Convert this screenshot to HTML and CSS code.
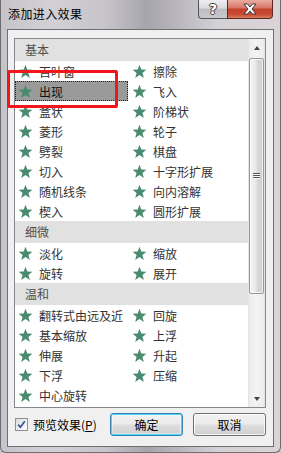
FILE: index.html
```html
<!DOCTYPE html>
<html lang="zh-CN">
<head>
<meta charset="utf-8">
<title>添加进入效果</title>
<link rel="stylesheet" href="styles.css">
</head>
<body>
<svg class="defs" width="0" height="0" aria-hidden="true">
  <symbol id="star" viewBox="0 0 24 24">
    <polygon points="12,1.2 14.9,8.8 23,9.1 16.7,14.2 18.9,22.4 12,17.7 5.1,22.4 7.3,14.2 1,9.1 9.1,8.8"/>
  </symbol>
</svg>
<div class="window">
  <div class="titlebar">
    <span class="title">添加进入效果</span>
    <div class="caption">
      <div class="cbtn help"><span>?</span></div>
      <div class="cbtn close">
        <svg width="16" height="12" viewBox="0 0 16 12"><path d="M2 1 H5.5 L8 4 L10.5 1 H14 L10 6 L14 11 H10.5 L8 8 L5.5 11 H2 L6 6 Z" fill="#fff" stroke="#3a3a3a" stroke-width="1" stroke-linejoin="round"/></svg>
      </div>
    </div>
  </div>
  <div class="client">
    <div class="listbox">
      <div class="list">
        <div class="group">基本</div>
        <div class="grid">
          <div class="item"><svg class="star"><use href="#star"/></svg>百叶窗</div>
          <div class="item"><svg class="star"><use href="#star"/></svg>擦除</div>
          <div class="item selected"><svg class="star"><use href="#star"/></svg>出现</div>
          <div class="item"><svg class="star"><use href="#star"/></svg>飞入</div>
          <div class="item"><svg class="star"><use href="#star"/></svg>盒状</div>
          <div class="item"><svg class="star"><use href="#star"/></svg>阶梯状</div>
          <div class="item"><svg class="star"><use href="#star"/></svg>菱形</div>
          <div class="item"><svg class="star"><use href="#star"/></svg>轮子</div>
          <div class="item"><svg class="star"><use href="#star"/></svg>劈裂</div>
          <div class="item"><svg class="star"><use href="#star"/></svg>棋盘</div>
          <div class="item"><svg class="star"><use href="#star"/></svg>切入</div>
          <div class="item"><svg class="star"><use href="#star"/></svg>十字形扩展</div>
          <div class="item"><svg class="star"><use href="#star"/></svg>随机线条</div>
          <div class="item"><svg class="star"><use href="#star"/></svg>向内溶解</div>
          <div class="item"><svg class="star"><use href="#star"/></svg>楔入</div>
          <div class="item"><svg class="star"><use href="#star"/></svg>圆形扩展</div>
        </div>
        <div class="group">细微</div>
        <div class="grid">
          <div class="item"><svg class="star"><use href="#star"/></svg>淡化</div>
          <div class="item"><svg class="star"><use href="#star"/></svg>缩放</div>
          <div class="item"><svg class="star"><use href="#star"/></svg>旋转</div>
          <div class="item"><svg class="star"><use href="#star"/></svg>展开</div>
        </div>
        <div class="group">温和</div>
        <div class="grid">
          <div class="item"><svg class="star"><use href="#star"/></svg>翻转式由远及近</div>
          <div class="item"><svg class="star"><use href="#star"/></svg>回旋</div>
          <div class="item"><svg class="star"><use href="#star"/></svg>基本缩放</div>
          <div class="item"><svg class="star"><use href="#star"/></svg>上浮</div>
          <div class="item"><svg class="star"><use href="#star"/></svg>伸展</div>
          <div class="item"><svg class="star"><use href="#star"/></svg>升起</div>
          <div class="item"><svg class="star"><use href="#star"/></svg>下浮</div>
          <div class="item"><svg class="star"><use href="#star"/></svg>压缩</div>
          <div class="item"><svg class="star"><use href="#star"/></svg>中心旋转</div>
        </div>
      </div>
      <div class="scrollbar">
        <div class="sb-btn"><span class="arrow up"></span></div>
        <div class="track">
          <div class="thumb"><span class="grip"></span></div>
        </div>
        <div class="sb-btn"><span class="arrow down"></span></div>
      </div>
    </div>
    <div class="footer">
      <div class="check">
        <span class="box"><svg width="11" height="11" viewBox="0 0 11 11"><path d="M2.2 5.6 L4.4 8.2 L8.8 2.2" fill="none" stroke="#34519a" stroke-width="1.7"/></svg></span>
        <span class="label">预览效果(<u>P</u>)</span>
      </div>
      <div class="btn default">确定</div>
      <div class="btn">取消</div>
    </div>
  </div>
  <div class="annotation"></div>
</div>
</body>
</html>
```
FILE: styles.css
```css
* { box-sizing: border-box; }
html, body { margin: 0; padding: 0; }
body {
  width: 281px;
  height: 453px;
  overflow: hidden;
  font-family: "Noto Sans CJK SC", "Noto Sans", sans-serif;
  font-size: 12px;
  background: #c9c7cc;
}
.defs { position: absolute; }

.window {
  position: relative;
  width: 281px;
  height: 453px;
  display: flex;
  flex-direction: column;
  border: 1px solid #6c6c70;
  border-top: none;
  border-radius: 0 0 6px 6px;
  background:
    linear-gradient(to right, #c6c4c9 0%, #d3d1d5 18%, #c6c4c9 38%, #a7a5ac 52%, #b6b4ba 62%, #d4d2d6 78%, #dcd3d7 100%);
}

.titlebar {
  height: 29px;
  flex: none;
  display: flex;
  align-items: flex-start;
  padding-left: 7px;
}
.title {
  margin-top: 5px;
  color: #000;
  font-size: 12px;
  letter-spacing: 0.4px;
  line-height: 18px;
}
.caption {
  margin-left: auto;
  margin-right: 7px;
  display: flex;
}
.cbtn {
  height: 19px;
  display: flex;
  align-items: center;
  justify-content: center;
  border: 1px solid #55555c;
  border-top: none;
}
.help {
  width: 29px;
  border-right: none;
  border-radius: 0 0 0 4px;
  background: linear-gradient(#eeeef0 0%, #dadadd 45%, #bdbdc3 52%, #c8c8ce 100%);
}
.help span {
  font-family: "DejaVu Sans", sans-serif;
  font-weight: bold;
  font-size: 14px;
  line-height: 14px;
  color: #fff;
  text-shadow: -1px 0 #3c3c3c, 1px 0 #3c3c3c, 0 -1px #3c3c3c, 0 1px #3c3c3c;
}
.close {
  width: 46px;
  border-radius: 0 0 4px 0;
  border-color: #5a2a22;
  background: linear-gradient(#e9ada0 0%, #d8776a 42%, #c4412c 52%, #c84b33 80%, #dc7d5e 100%);
}

.client {
  flex: 1;
  margin: 0 6px 5px 6px;
  border: 1px solid #6f6f6f;
  background: #f0f0f0;
  padding: 8px 7px 0 6px;
  display: flex;
  flex-direction: column;
}

.listbox {
  width: 252px;
  height: 370px;
  border: 1px solid #828790;
  display: flex;
  background: #fff;
}
.list {
  flex: 1;
  overflow: hidden;
  background: #fff;
}
.group {
  height: 22px;
  line-height: 22px;
  padding-left: 10px;
  background: #e1e1e1;
  color: #4f4f4f;
}
.grid {
  display: grid;
  grid-template-columns: 114px 1fr;
  grid-auto-rows: 20px;
}
.item {
  display: flex;
  align-items: center;
  height: 20px;
  padding-left: 3px;
  color: #333;
  white-space: nowrap;
}
.item.selected {
  margin-right: 1px;
  background: #9a9a9a;
  outline: 1px dotted #222;
  outline-offset: -1px;
  color: #111;
}
.star {
  width: 15px;
  height: 15px;
  fill: #4a8b70;
  margin-right: 6px;
  flex: none;
}

.scrollbar {
  width: 17px;
  display: flex;
  flex-direction: column;
  background: linear-gradient(to right, #e2e2e2 0%, #eeeeee 12%, #f3f3f3 50%, #eeeeee 88%, #e2e2e2 100%);
}
.sb-btn {
  height: 17px;
  flex: none;
  display: flex;
  align-items: center;
  justify-content: center;
}
.arrow {
  width: 0;
  height: 0;
  border-left: 3.5px solid transparent;
  border-right: 3.5px solid transparent;
  margin-left: 1px;
}
.arrow.up { border-bottom: 4px solid #444; }
.arrow.down { border-top: 4px solid #444; }
.track {
  flex: 1;
  padding-top: 2px;
}
.thumb {
  margin-left: 1px;
  width: 15px;
  height: 236px;
  border: 1px solid #979797;
  border-radius: 2px;
  background: linear-gradient(to right, #f4f4f4 0%, #e8e8e8 45%, #d9d9d9 55%, #cfcfcf 100%);
  box-shadow: inset 0 0 0 1px rgba(255,255,255,0.7);
  display: flex;
  align-items: center;
  justify-content: center;
}
.grip {
  width: 7px;
  height: 6px;
  background: repeating-linear-gradient(#555 0 1px, #fafafa 1px 2px);
}

.footer {
  margin-top: 5px;
  height: 23px;
  display: flex;
  align-items: center;
}
.check {
  flex: 1;
  display: flex;
  align-items: center;
  padding-left: 1px;
  color: #000;
}
.box {
  width: 13px;
  height: 13px;
  border: 1px solid #8e8f8f;
  background: linear-gradient(135deg, #dcdcdc, #fdfdfd);
  display: flex;
  align-items: center;
  justify-content: center;
  margin-right: 5px;
}
.label u { text-decoration: underline; text-underline-offset: 1px; }
.btn {
  width: 73px;
  height: 23px;
  border: 1px solid #707070;
  border-radius: 3px;
  background: linear-gradient(#f2f2f2 0%, #ebebeb 48%, #dddddd 52%, #cfcfcf 100%);
  box-shadow: inset 0 0 0 1px rgba(255,255,255,0.8);
  display: flex;
  align-items: center;
  justify-content: center;
  color: #000;
  margin-left: 10px;
}
.btn.default {
  border-color: #3c7fb1;
  box-shadow: inset 0 0 0 1px #48d5fa, inset 0 0 0 2px rgba(255,255,255,0.4);
}

.annotation {
  position: absolute;
  left: 6px;
  top: 70px;
  width: 111px;
  height: 38px;
  border: 3px solid #f2161a;
  border-radius: 2px;
}
```
